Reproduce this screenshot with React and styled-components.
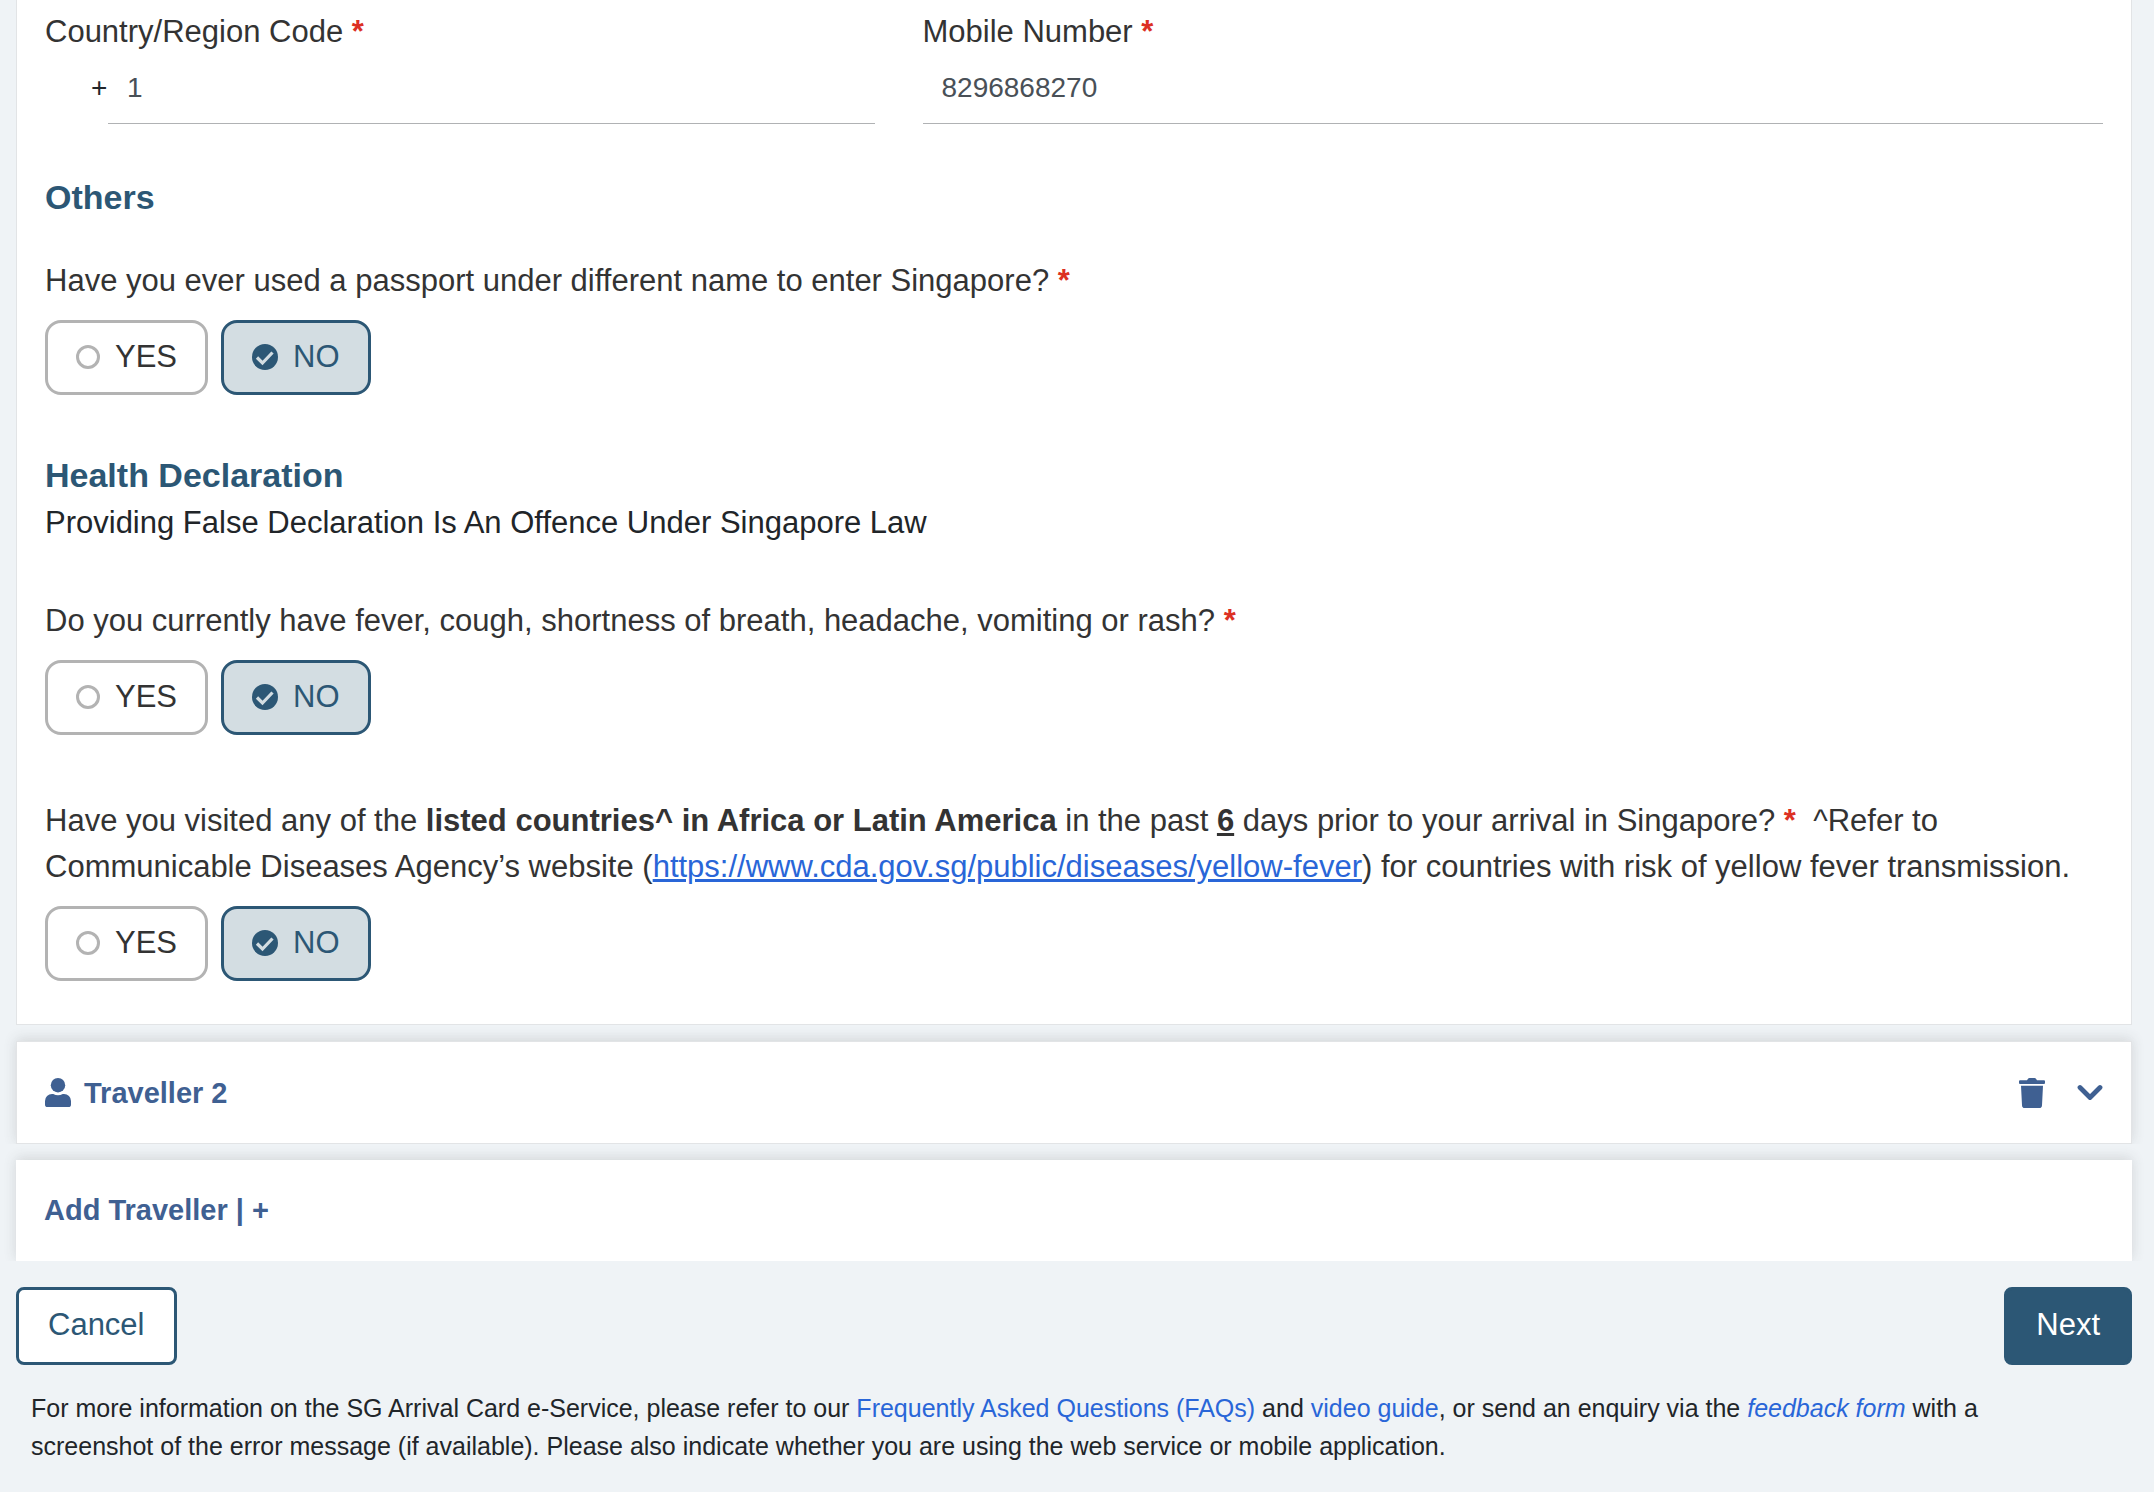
import React, { useState } from "react";
import styled, { createGlobalStyle, css } from "styled-components";

const color = {
  page: "#eff3f6",
  navy: "#2c5775",
  blue: "#3f6092",
  link: "#2966d8",
  text: "#333333",
  ink: "#212529",
  line: "#b0b2b4",
  edge: "#e2e4e6",
  required: "#dc3023",
};

const GlobalStyle = createGlobalStyle`
  *, *::before, *::after { box-sizing: border-box; }
  body {
    margin: 0;
    background: ${color.page};
    color: ${color.ink};
    font-family: "Liberation Sans", Arial, Helvetica, sans-serif;
    font-size: 31px;
    line-height: 46px;
  }
`;

const Page = styled.main`
  padding: 0 22px 16px 16px;
`;

const cardBase = css`
  background: #fff;
  padding: 0 28px;
`;

const Card = styled.section`
  ${cardBase}
  border: 1px solid ${color.edge};
  border-top: 0;
  padding-top: 9px;
  padding-bottom: 43px;
`;

const barShadow = css`
  box-shadow: 0 -2px 12px rgba(60, 60, 60, 0.16);
  clip-path: inset(-16px -16px 0 -16px);
`;

const FieldRow = styled.div`
  display: flex;
  margin: 0 -24px;
`;

const Field = styled.div`
  flex: 0 0 calc(100% / 12 * ${(p) => p.$span});
  padding: 0 24px;
  min-width: 0;
`;

const FieldLabel = styled.label`
  display: block;
  color: ${color.text};
`;

const Required = styled.span`
  color: ${color.required};
  font-weight: 700;
`;

const InputLine = styled.div`
  display: flex;
  align-items: center;
  padding-left: ${(p) => (p.$prefixed ? "46px" : "0")};
`;

const Prefix = styled.span`
  width: 17px;
  padding-bottom: 4px;
  font-size: 28px;
`;

const TextInput = styled.input`
  flex: 1;
  min-width: 0;
  height: 69px;
  padding: 0 19px 2px;
  border: 0;
  border-bottom: 1px solid ${color.line};
  background: transparent;
  color: #495057;
  font-family: inherit;
  font-size: 28px;
  outline: none;
`;

const Heading = styled.h2`
  margin: ${(p) => p.$top}px 0 0;
  color: ${color.navy};
  font-size: 34px;
  line-height: 50px;
  font-weight: 700;
`;

const Note = styled.p`
  margin: 0;
`;

const Fieldset = styled.fieldset`
  margin: ${(p) => p.$top}px 0 0;
  padding: 0;
  border: 0;
  min-width: 0;
`;

const Legend = styled.legend`
  padding: 0;
  color: ${color.text};
`;

const Choices = styled.div`
  display: flex;
  gap: 13px;
  margin-top: 16px;
`;

const Choice = styled.label`
  display: flex;
  align-items: center;
  gap: 15px;
  height: 75px;
  padding: 0 28px 2px;
  border: 3px solid ${(p) => (p.$checked ? color.navy : "#b3b3b3")};
  border-radius: 16px;
  background: ${(p) => (p.$checked ? "#d3dde2" : "#fff")};
  color: ${(p) => (p.$checked ? color.navy : color.text)};
  cursor: pointer;
`;

const Radio = styled.input`
  appearance: none;
  margin: 0;
  width: 24px;
  height: 24px;
  border: 3px solid #b3b3b3;
  border-radius: 50%;
  &:checked {
    width: 26px;
    height: 26px;
    border: 0;
    background: ${color.navy};
  }
`;

const Dot = styled.span`
  display: grid;
  place-items: center;
  & > * {
    grid-area: 1 / 1;
  }
  svg {
    pointer-events: none;
  }
`;

const TravellerBar = styled.section`
  ${cardBase}
  ${barShadow}
  display: flex;
  align-items: center;
  justify-content: space-between;
  height: 103px;
  margin-top: 16px;
  border: 1px solid ${color.edge};
`;

const BarTitle = styled.h3`
  display: flex;
  align-items: center;
  gap: 13px;
  margin: 0;
  color: ${color.blue};
  font-size: 29px;
  font-weight: 700;
`;

const BarActions = styled.div`
  display: flex;
  align-items: center;
  gap: 32px;
`;

const IconButton = styled.button`
  display: flex;
  padding: 0;
  border: 0;
  background: none;
  color: ${color.blue};
  cursor: pointer;
`;

const AddTraveller = styled.button`
  ${cardBase}
  ${barShadow}
  display: block;
  width: 100%;
  height: 101px;
  margin-top: 16px;
  border: 0;
  color: ${color.blue};
  font-family: inherit;
  font-size: 29px;
  font-weight: 700;
  text-align: left;
  cursor: pointer;
`;

const Actions = styled.div`
  display: flex;
  justify-content: space-between;
  margin-top: 26px;
`;

const ActionButton = styled.button`
  height: 78px;
  padding: 0 29px 2px;
  border: 3px solid ${color.navy};
  border-radius: 8px;
  background: ${(p) => (p.$primary ? color.navy : "#fff")};
  color: ${(p) => (p.$primary ? "#fff" : color.navy)};
  font-family: inherit;
  font-size: 31px;
  cursor: pointer;
`;

const Footnote = styled.p`
  margin: 24px 0 0;
  padding: 0 32px 0 15px;
  font-size: 25px;
  line-height: 38px;
`;

const Link = styled.a`
  color: ${color.link};
  text-decoration: ${(p) => (p.$underlined ? "underline" : "none")};
  text-decoration-thickness: 3px;
`;

const CheckMark = () => (
  <svg width="26" height="26" viewBox="0 0 26 26" fill="none" aria-hidden="true">
    <path d="M5 13.500l5.500 5.500L20.500 8.500" stroke="#d3dde2" strokeWidth="3.200" />
  </svg>
);

const PersonIcon = () => (
  <svg width="26" height="29" viewBox="0 0 26 29" fill="currentColor" aria-hidden="true">
    <circle cx="13" cy="7.200" r="7.200" />
    <path d="M7 16h1.200a10.500 10.500 0 0 0 9.600 0H19a7 7 0 0 1 7 7V26.400A2.600 2.600 0 0 1 23.400 29H2.600A2.600 2.600 0 0 1 0 26.400V23a7 7 0 0 1 7-7z" />
  </svg>
);

const TrashIcon = () => (
  <svg width="26" height="30" viewBox="0 0 26 30" fill="currentColor" aria-hidden="true">
    <path d="M1 2.200h7L9.200.6Q9.700 0 10.400 0h5.200q.7 0 1.200.6L18 2.200h7a1 1 0 0 1 1 1V5a1 1 0 0 1-1 1H1a1 1 0 0 1-1-1V3.200a1 1 0 0 1 1-1z" />
    <path d="M2 7.800h22l-1 19.400A2.800 2.800 0 0 1 20.200 30H5.800A2.800 2.800 0 0 1 3 27.200z" />
  </svg>
);

const ChevronIcon = () => (
  <svg width="26" height="28" viewBox="0 0 26 28" fill="none" aria-hidden="true">
    <path d="M3 8.500L13 18.500 23 8.500" stroke="currentColor" strokeWidth="4.800" strokeLinecap="round" strokeLinejoin="round" />
  </svg>
);

function YesNo({ name, top, children }) {
  const [value, setValue] = useState("NO");
  return (
    <Fieldset $top={top}>
      <Legend>{children}</Legend>
      <Choices>
        {["YES", "NO"].map((option) => (
          <Choice key={option} $checked={value === option}>
            <Dot>
              <Radio
                type="radio"
                name={name}
                checked={value === option}
                onChange={() => setValue(option)}
              />
              {value === option && <CheckMark />}
            </Dot>
            {option}
          </Choice>
        ))}
      </Choices>
    </Fieldset>
  );
}

export default function App() {
  return (
    <>
      <GlobalStyle />
      <Page>
        <Card>
          <FieldRow>
            <Field $span={5}>
              <FieldLabel htmlFor="country-code">
                Country/Region Code <Required>*</Required>
              </FieldLabel>
              <InputLine $prefixed>
                <Prefix>+</Prefix>
                <TextInput id="country-code" defaultValue="1" />
              </InputLine>
            </Field>
            <Field $span={7}>
              <FieldLabel htmlFor="mobile">
                Mobile Number <Required>*</Required>
              </FieldLabel>
              <InputLine>
                <TextInput id="mobile" type="tel" defaultValue="8296868270" />
              </InputLine>
            </Field>
          </FieldRow>

          <Heading $top={48}>Others</Heading>
          <YesNo name="other-name" top={36}>
            Have you ever used a passport under different name to enter Singapore? <Required>*</Required>
          </YesNo>

          <Heading $top={55}>Health Declaration</Heading>
          <Note>Providing False Declaration Is An Offence Under Singapore Law</Note>
          <YesNo name="symptoms" top={52}>
            Do you currently have fever, cough, shortness of breath, headache, vomiting or rash?{" "}
            <Required>*</Required>
          </YesNo>
          <YesNo name="visited" top={63}>
            Have you visited any of the <b>listed countries^ in Africa or Latin America</b> in the past{" "}
            <b>
              <u>6</u>
            </b>{" "}
            days prior to your arrival in Singapore? <Required>*</Required>
            &nbsp; ^Refer to Communicable Diseases Agency’s website (
            <Link $underlined href="https://www.cda.gov.sg/public/diseases/yellow-fever">
              https://www.cda.gov.sg/public/diseases/yellow-fever
            </Link>
            ) for countries with risk of yellow fever transmission.
          </YesNo>
        </Card>

        <TravellerBar>
          <BarTitle>
            <PersonIcon />
            Traveller 2
          </BarTitle>
          <BarActions>
            <IconButton type="button" aria-label="Delete traveller">
              <TrashIcon />
            </IconButton>
            <IconButton type="button" aria-label="Expand traveller">
              <ChevronIcon />
            </IconButton>
          </BarActions>
        </TravellerBar>

        <AddTraveller type="button">Add Traveller | +</AddTraveller>

        <Actions>
          <ActionButton type="button">Cancel</ActionButton>
          <ActionButton type="button" $primary>
            Next
          </ActionButton>
        </Actions>

        <Footnote>
          For more information on the SG Arrival Card e-Service, please refer to our{" "}
          <Link href="#faqs">Frequently Asked Questions (FAQs)</Link> and{" "}
          <Link href="#video-guide">video guide</Link>, or send an enquiry via the{" "}
          <Link href="#feedback">
            <em>feedback form</em>
          </Link>{" "}
          with a screenshot of the error message (if available). Please also indicate whether you are
          using the web service or mobile application.
        </Footnote>
      </Page>
    </>
  );
}
